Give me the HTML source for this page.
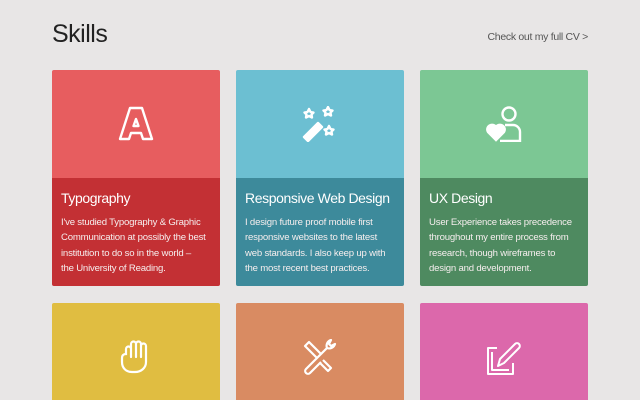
<!DOCTYPE html>
<html><head><meta charset="utf-8"><style>
*{margin:0;padding:0;box-sizing:border-box}
html,body{width:640px;height:400px;overflow:hidden}
body{background:#e8e6e6;font-family:"Liberation Sans",sans-serif;position:relative}
h1{position:absolute;left:52px;top:20px;font-size:25px;font-weight:normal;color:#222;letter-spacing:-0.5px}
.cv{position:absolute;right:52px;top:31px;font-size:10.5px;color:#555;letter-spacing:-0.3px}
.card{position:absolute;width:168px;border-radius:2px;overflow:hidden}
.top{height:108px;position:relative}
.top svg{position:absolute;left:50%;top:50%;transform:translate(-50%,-50%)}
.bot{height:108px;padding:12px 9px;color:#fff}
.bot h2{font-size:14px;font-weight:normal;margin-bottom:9px;letter-spacing:-0.4px;white-space:nowrap}
.bot p{font-size:9.6px;line-height:15.4px;color:#f6eeee;letter-spacing:-0.2px;white-space:nowrap}
</style></head><body>
<h1>Skills</h1>
<div class="cv">Check out my full CV &gt;</div>

<div class="card" style="left:52px;top:70px">
 <div class="top" style="background:#e75d5f"><svg width="36" height="36" viewBox="0 0 36 36" fill="none" stroke="#fff" stroke-width="2.4" stroke-linejoin="round"><path d="M12 2h12l10 31h-9l-2-6h-10l-2 6h-9z"/><path d="M18 13l-2.5 7h5z"/></svg></div>
 <div class="bot" style="background:#c33034"><h2>Typography</h2><p>I've studied Typography &amp; Graphic<br>Communication at possibly the best<br>institution to do so in the world –<br>the University of Reading.</p></div>
</div>
<div class="card" style="left:236px;top:70px">
 <div class="top" style="background:#6cbfd2"><svg width="36" height="36" viewBox="0 0 36 36" fill="none" stroke="#fff" stroke-width="2.4" stroke-linejoin="round"><path d="M2 31l14-14 4 4-14 14z" fill="#fff"/><path d="M7 3l1.5 3 3 .5-2 2 .5 3-3-1.5-3 1.5.5-3-2-2 3-.5z"/><path d="M26 1l1.5 3 3 .5-2 2 .5 3-3-1.5-3 1.5.5-3-2-2 3-.5z"/><path d="M27 20l1.5 3 3 .5-2 2 .5 3-3-1.5-3 1.5.5-3-2-2 3-.5z"/></svg></div>
 <div class="bot" style="background:#3d8a9b"><h2>Responsive Web Design</h2><p>I design future proof mobile first<br>responsive websites to the latest<br>web standards. I also keep up with<br>the most recent best practices.</p></div>
</div>
<div class="card" style="left:420px;top:70px">
 <div class="top" style="background:#7cc794"><svg width="36" height="36" viewBox="0 0 36 36" fill="none" stroke="#fff" stroke-width="2.4"><circle cx="23" cy="8" r="6.5"/><path d="M14 35h20v-9a7 7 0 0 0-7-7h-8"/><path d="M10 34l-8-8a4.5 4.5 0 0 1 8-5 4.5 4.5 0 0 1 8 5z" fill="#fff"/></svg></div>
 <div class="bot" style="background:#4e8a60"><h2>UX Design</h2><p>User Experience takes precedence<br>throughout my entire process from<br>research, though wireframes to<br>design and development.</p></div>
</div>

<div class="card" style="left:52px;top:303px">
 <div class="top" style="background:#e0bd41"><svg width="36" height="36" viewBox="0 0 36 36" fill="none" stroke="#fff" stroke-width="2.2" stroke-linecap="round"><path d="M8 15v-5a2.5 2.5 0 0 1 5 0v-5a2.5 2.5 0 0 1 5 0a2.5 2.5 0 0 1 5 0v2a2.5 2.5 0 0 1 5 0v16c0 6-5 10-11 10h-3c-6 0-10-4-10-10v-4c0-3 2-4 4-4z"/><path d="M13 10v8M18 5v13M23 7v11"/></svg></div>
</div>
<div class="card" style="left:236px;top:303px">
 <div class="top" style="background:#d98b62"><svg width="36" height="36" viewBox="0 0 36 36" fill="none" stroke="#fff" stroke-width="2.2" stroke-linejoin="round"><path d="M3 7l4-4 12 12-4 4z"/><path d="M15 19l-11 11a2.5 2.5 0 0 0 4 4l11-11"/><path d="M19 15l6-6a6 6 0 0 1 4-8l-2 4 2 2 4-2a6 6 0 0 1-8 4l-6 6"/><path d="M21 21l8 8-3 3-8-8"/></svg></div>
</div>
<div class="card" style="left:420px;top:303px">
 <div class="top" style="background:#dc68ab"><svg width="36" height="36" viewBox="0 0 36 36" fill="none" stroke="#fff" stroke-width="2" stroke-linejoin="round"><path d="M11 9H2v26h25V24"/><path d="M6 13v18h17"/><path d="M12 27l2-7 15-15a2.5 2.5 0 0 1 4 4l-15 15z"/></svg></div>
</div>
</body></html>
